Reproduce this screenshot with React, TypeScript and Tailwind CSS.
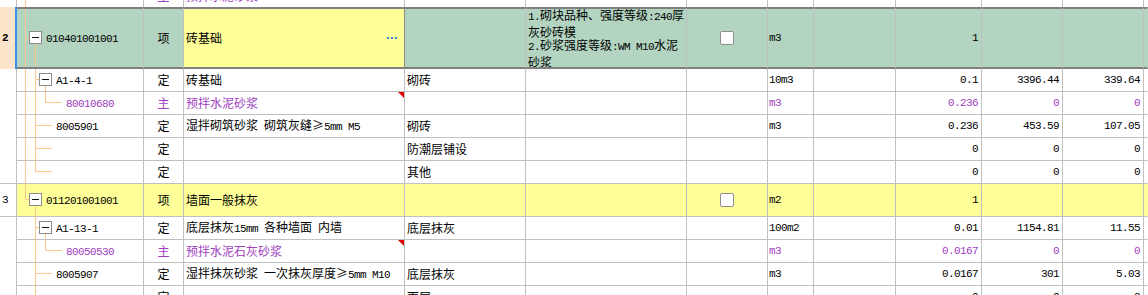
import React from 'react';

const GRID =
  'grid grid-cols-[17px_127px_40px_221px_121px_161px_81px_46px_82px_86px_81px_81px_4px]';

// latin runs in a narrow mono face, CJK runs in Noto
function Mixed({ s }: { s: string }) {
  const parts = s.match(/[\x00-\x7f]+|[^\x00-\x7f]+/g) || [];
  return (
    <>
      {parts.map((p, i) =>
        /^[\x00-\x7f]/.test(p) ? (
          <span key={i} className="font-['Liberation_Mono',monospace] text-[11px] tracking-[-0.6px]">
            {p}
          </span>
        ) : (
          <span key={i}>{p}</span>
        )
      )}
    </>
  );
}

interface TreeSpec {
  v?: number[][];
  hz?: number[][];
  boxes?: number[][];
}

function Tree({ h, t }: { h: number; t: TreeSpec }) {
  return (
    <svg width={126} height={h} className="absolute left-0 top-0">
      {(t.v || []).map(([x, y1, y2], i) => (
        <rect key={'v' + i} x={x} y={y1} width={1} height={y2 - y1} fill="#fcc98a" />
      ))}
      {(t.hz || []).map(([x1, x2, y], i) => (
        <rect key={'h' + i} x={x1} y={y} width={x2 - x1} height={1} fill="#fcc98a" />
      ))}
      {(t.boxes || []).map(([x, y], i) => (
        <g key={'b' + i}>
          <rect x={x + 0.5} y={y + 0.5} width={12} height={12} fill="#fff" stroke="#8c8c8c" />
          <rect x={x + 3} y={y + 6} width={7} height={1} fill="#111" />
        </g>
      ))}
    </svg>
  );
}

function Cell({
  sel,
  noB,
  rc = 'border-r-[#c0c0c0]',
  className = '',
  children,
}: {
  sel?: boolean;
  noB?: boolean;
  rc?: string;
  className?: string;
  children?: React.ReactNode;
}) {
  const yb = sel
    ? 'border-t-2 border-b-2 border-t-[#808080] border-b-[#808080]'
    : noB
    ? ''
    : 'border-b border-b-[#c0c0c0]';
  return (
    <div className={`relative flex items-center overflow-hidden border-r ${rc} ${yb} ${className}`}>
      {children}
    </div>
  );
}

interface RowData {
  h: number;
  hCls: string;
  wrap?: string;
  sel?: boolean;
  noB?: boolean;
  bg?: string;
  num?: string;
  numB?: boolean;
  tree: TreeSpec;
  indent?: string;
  code?: string;
  type?: string;
  name?: string;
  work?: string;
  feat?: string[];
  check?: boolean;
  unit?: string;
  qty?: string;
  price?: string;
  total?: string;
  purple?: boolean;
  flag?: boolean;
}

const rows: RowData[] = [
  {
    h: 22,
    hCls: 'h-[22px]',
    wrap: '-mt-[15px]',
    noB: true,
    tree: { v: [[8, 0, 22]] },
    type: '主',
    name: '预拌水泥砂浆',
    purple: true,
  },
  {
    h: 58,
    hCls: 'h-[62px]',
    sel: true,
    bg: 'bg-[#b3d4c1]',
    num: '2',
    tree: { v: [[8, 0, 58], [18, 35, 58]], hz: [[8, 12, 28]], boxes: [[12, 22]] },
    indent: 'pl-[29px]',
    code: '010401001001',
    type: '项',
    name: '砖基础',
    feat: ['1.砌块品种、强度等级:240厚', '灰砂砖模', '2.砂浆强度等级:WM M10水泥', '砂浆'],
    check: true,
    unit: 'm3',
    qty: '1',
  },
  {
    h: 22,
    hCls: 'h-[23px]',
    tree: { v: [[8, 0, 22], [18, 0, 22], [28, 17, 22]], hz: [[18, 22, 10]], boxes: [[22, 4]] },
    indent: 'pl-[39px]',
    code: 'A1-4-1',
    type: '定',
    name: '砖基础',
    work: '砌砖',
    unit: '10m3',
    qty: '0.1',
    price: '3396.44',
    total: '339.64',
  },
  {
    h: 22,
    hCls: 'h-[23px]',
    tree: { v: [[8, 0, 22], [18, 0, 22], [28, 0, 10]], hz: [[28, 45, 10]] },
    indent: 'pl-[49px]',
    code: '80010680',
    type: '主',
    name: '预拌水泥砂浆',
    unit: 'm3',
    qty: '0.236',
    price: '0',
    total: '0',
    purple: true,
    flag: true,
  },
  {
    h: 22,
    hCls: 'h-[23px]',
    tree: { v: [[8, 0, 22], [18, 0, 22]], hz: [[18, 35, 10]] },
    indent: 'pl-[39px]',
    code: '8005901',
    type: '定',
    name: '湿拌砌筑砂浆 砌筑灰缝≥5mm M5',
    work: '砌砖',
    unit: 'm3',
    qty: '0.236',
    price: '453.59',
    total: '107.05',
  },
  {
    h: 22,
    hCls: 'h-[23px]',
    tree: { v: [[8, 0, 22], [18, 0, 22]], hz: [[18, 35, 10]] },
    type: '定',
    work: '防潮层铺设',
    qty: '0',
    price: '0',
    total: '0',
  },
  {
    h: 22,
    hCls: 'h-[23px]',
    numB: true,
    tree: { v: [[8, 0, 22], [18, 0, 10]], hz: [[18, 35, 10]] },
    type: '定',
    work: '其他',
    qty: '0',
    price: '0',
    total: '0',
  },
  {
    h: 32,
    hCls: 'h-[33px]',
    bg: 'bg-[#ffff99]',
    num: '3',
    numB: true,
    tree: { v: [[8, 0, 15], [18, 22, 32]], hz: [[8, 12, 15]], boxes: [[12, 9]] },
    indent: 'pl-[29px]',
    code: '011201001001',
    type: '项',
    name: '墙面一般抹灰',
    check: true,
    unit: 'm2',
    qty: '1',
  },
  {
    h: 22,
    hCls: 'h-[23px]',
    tree: { v: [[18, 0, 22], [28, 17, 22]], hz: [[18, 22, 10]], boxes: [[22, 4]] },
    indent: 'pl-[39px]',
    code: 'A1-13-1',
    type: '定',
    name: '底层抹灰15mm 各种墙面 内墙',
    work: '底层抹灰',
    unit: '100m2',
    qty: '0.01',
    price: '1154.81',
    total: '11.55',
  },
  {
    h: 22,
    hCls: 'h-[23px]',
    tree: { v: [[18, 0, 22], [28, 0, 10]], hz: [[28, 45, 10]] },
    indent: 'pl-[49px]',
    code: '80050530',
    type: '主',
    name: '预拌水泥石灰砂浆',
    unit: 'm3',
    qty: '0.0167',
    price: '0',
    total: '0',
    purple: true,
    flag: true,
  },
  {
    h: 22,
    hCls: 'h-[23px]',
    tree: { v: [[18, 0, 22]], hz: [[18, 35, 10]] },
    indent: 'pl-[39px]',
    code: '8005907',
    type: '定',
    name: '湿拌抹灰砂浆 一次抹灰厚度≥5mm M10',
    work: '底层抹灰',
    unit: 'm3',
    qty: '0.0167',
    price: '301',
    total: '5.03',
  },
  {
    h: 22,
    hCls: 'h-[23px]',
    tree: { v: [[18, 0, 22]] },
    type: '定',
    work: '面层',
    qty: '0',
    price: '0',
    total: '0',
  },
];

function Row({ d }: { d: RowData }) {
  const c = { sel: d.sel, noB: d.noB };
  const numCls = d.sel
    ? 'bg-[#fde5cc] border-r-2 border-r-[#3d8ee6] font-bold'
    : d.numB
    ? 'bg-white border-r border-b border-[#c0c0c0]'
    : 'bg-white border-r border-r-[#c0c0c0]';
  return (
    <div className={`${GRID} ${d.hCls} ${d.bg ?? ''} ${d.wrap ?? ''} ${d.purple ? 'text-[#a040c0]' : ''}`}>
      {/* row number */}
      <div className={`flex items-center pl-[2px] font-['Liberation_Mono',monospace] text-[11px] ${numCls}`}>
        {d.num}
      </div>

      {/* code / tree */}
      <Cell {...c}>
        <Tree h={d.h} t={d.tree} />
        {d.code && (
          <div className={`relative whitespace-pre ${d.indent ?? ''}`}>
            <Mixed s={d.code} />
          </div>
        )}
      </Cell>

      <Cell {...c} className="justify-center">
        {d.type}
      </Cell>

      {/* name */}
      {d.sel ? (
        <Cell {...c} rc="border-r-[#8c8c8c]" className="justify-between bg-[#ffff99] pl-[2px] pr-[7px]">
          <span>{d.name}</span>
          <div className="flex gap-[2px]">
            <span className="h-[2px] w-[2px] bg-[#3a80d8]" />
            <span className="h-[2px] w-[2px] bg-[#3a80d8]" />
            <span className="h-[2px] w-[2px] bg-[#3a80d8]" />
          </div>
        </Cell>
      ) : (
        <Cell {...c} className="pl-[2px]">
          {d.name && (
            <div className="whitespace-pre">
              <Mixed s={d.name} />
            </div>
          )}
          {d.flag && (
            <div className="absolute right-0 top-0 h-0 w-0 border-l-[6px] border-t-[6px] border-l-transparent border-t-[#e00000]" />
          )}
        </Cell>
      )}

      <Cell {...c} className="pl-[2px]">
        {d.work}
      </Cell>

      {/* features */}
      <Cell {...c} className="pl-[2px]">
        {d.feat && (
          <div className="leading-[13.5px]">
            {d.feat.map((l) => (
              <div key={l} className="whitespace-pre">
                <Mixed s={l} />
              </div>
            ))}
          </div>
        )}
      </Cell>

      <Cell {...c} className="justify-center">
        {d.check && <div className="h-[14px] w-[14px] rounded-[2px] border border-[#8f8f8f] bg-white" />}
      </Cell>

      <Cell {...c} className="pl-[1px]">
        {d.unit && <Mixed s={d.unit} />}
      </Cell>

      <Cell {...c} />

      <Cell {...c} className="justify-end pr-[3px]">
        {d.qty && <Mixed s={d.qty} />}
      </Cell>
      <Cell {...c} className="justify-end pr-[3px]">
        {d.price && <Mixed s={d.price} />}
      </Cell>
      <Cell {...c} className="justify-end pr-[3px]">
        {d.total && <Mixed s={d.total} />}
      </Cell>
      <Cell {...c} rc="border-r-transparent" />
    </div>
  );
}

export default function App() {
  return (
    <div className="h-[295px] w-[1148px] overflow-hidden bg-white font-['Noto_Sans_CJK_SC',sans-serif] text-[12px] leading-[14px] text-black">
      {rows.map((d, i) => (
        <Row key={i} d={d} />
      ))}
    </div>
  );
}
